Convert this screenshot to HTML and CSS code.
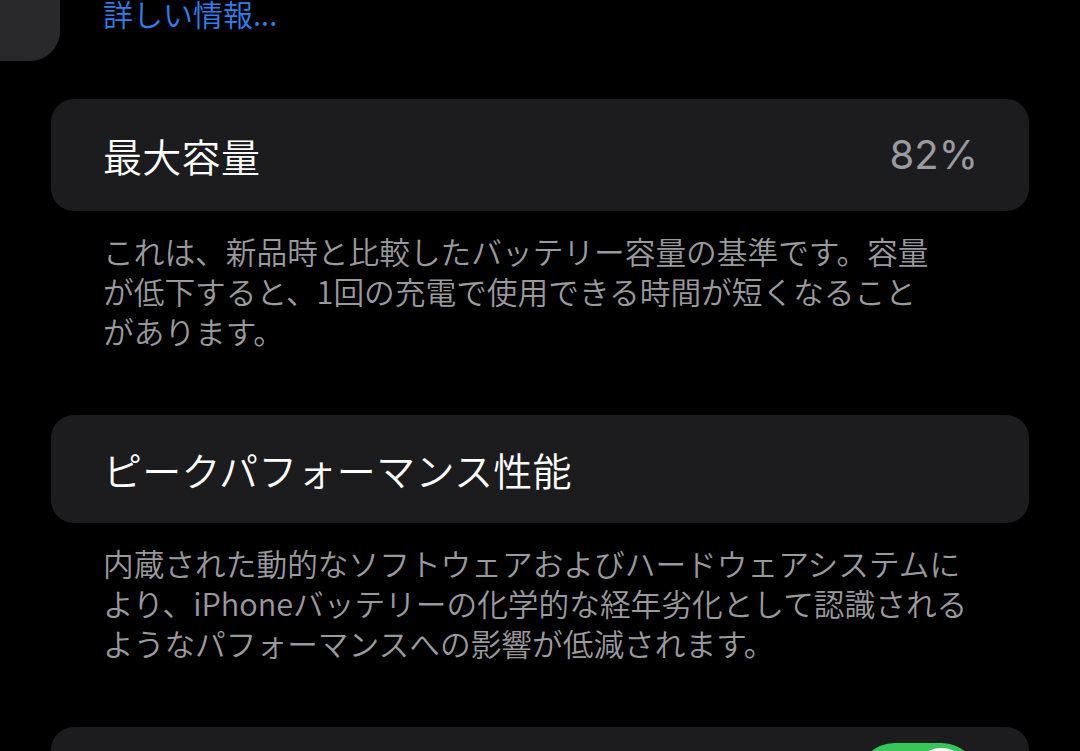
FILE: index.html
```html
<!DOCTYPE html>
<html lang="ja">
<head>
<meta charset="utf-8">
<link rel="stylesheet" href="styles.css">
</head>
<body>
<div class="corner-fragment"></div>
<main class="page">
  <a class="link">詳しい情報...</a>

  <section class="card card-capacity">
    <span class="title">最大容量</span>
    <span class="value">82%</span>
  </section>
  <p class="note">これは、新品時と比較したバッテリー容量の基準です。容量<br>が低下すると、1回の充電で使用できる時間が短くなること<br>があります。</p>

  <section class="card card-peak">
    <span class="title">ピークパフォーマンス性能</span>
  </section>
  <p class="note">内蔵された動的なソフトウェアおよびハードウェアシステムに<br>より、iPhoneバッテリーの化学的な経年劣化として認識される<br>ようなパフォーマンスへの影響が低減されます。</p>

  <section class="card card-toggle">
    <span class="title"></span>
    <span class="switch"><span class="knob"></span></span>
  </section>
</main>
</body>
</html>
```

FILE: styles.css
```css
html, body {
  margin: 0;
  padding: 0;
  background: #000;
  height: 751px;
  overflow: hidden;
}

body {
  font-family: "Noto Sans CJK JP", "Noto Sans", sans-serif;
  color: #fff;
  position: relative;
}

.corner-fragment {
  position: absolute;
  left: 0;
  top: 0;
  width: 60px;
  height: 61px;
  background: #29292b;
  border-bottom-right-radius: 30px;
}

.page {
  padding: 0 51px;
  display: flex;
  flex-direction: column;
}

.link {
  display: block;
  margin: -7px 0 0 52px;
  font-size: 30px;
  line-height: 40px;
  color: #2f80ec;
  font-weight: 350;
}

.card {
  background: #1c1c1e;
  border-radius: 23px;
  display: flex;
  align-items: center;
  justify-content: space-between;
  padding: 0 51px 0 52px;
}

.card-capacity {
  margin-top: 66px;
  height: 112px;
}

.card-peak {
  margin-top: 64px;
  height: 108px;
}

.card-toggle {
  margin-top: 64px;
  height: 105px;
  flex-shrink: 0;
}

.title {
  font-size: 39px;
  line-height: 50px;
  color: #fff;
  letter-spacing: 0.3px;
  font-weight: 350;
}

.value {
  font-family: Inter, "Noto Sans", sans-serif;
  font-size: 40px;
  line-height: 50px;
  color: #9a9a9f;
  font-weight: 400;
}

.note {
  margin: 20px 0 0 52px;
  font-size: 30.7px;
  line-height: 40px;
  color: #9a9a9e;
  white-space: nowrap;
  font-weight: 350;
}

.switch {
  position: relative;
  width: 120px;
  height: 73px;
  border-radius: 37px;
  background: #34c759;
}

.knob {
  position: absolute;
  right: 5px;
  top: 5px;
  width: 63px;
  height: 63px;
  border-radius: 50%;
  background: #fff;
}
```
